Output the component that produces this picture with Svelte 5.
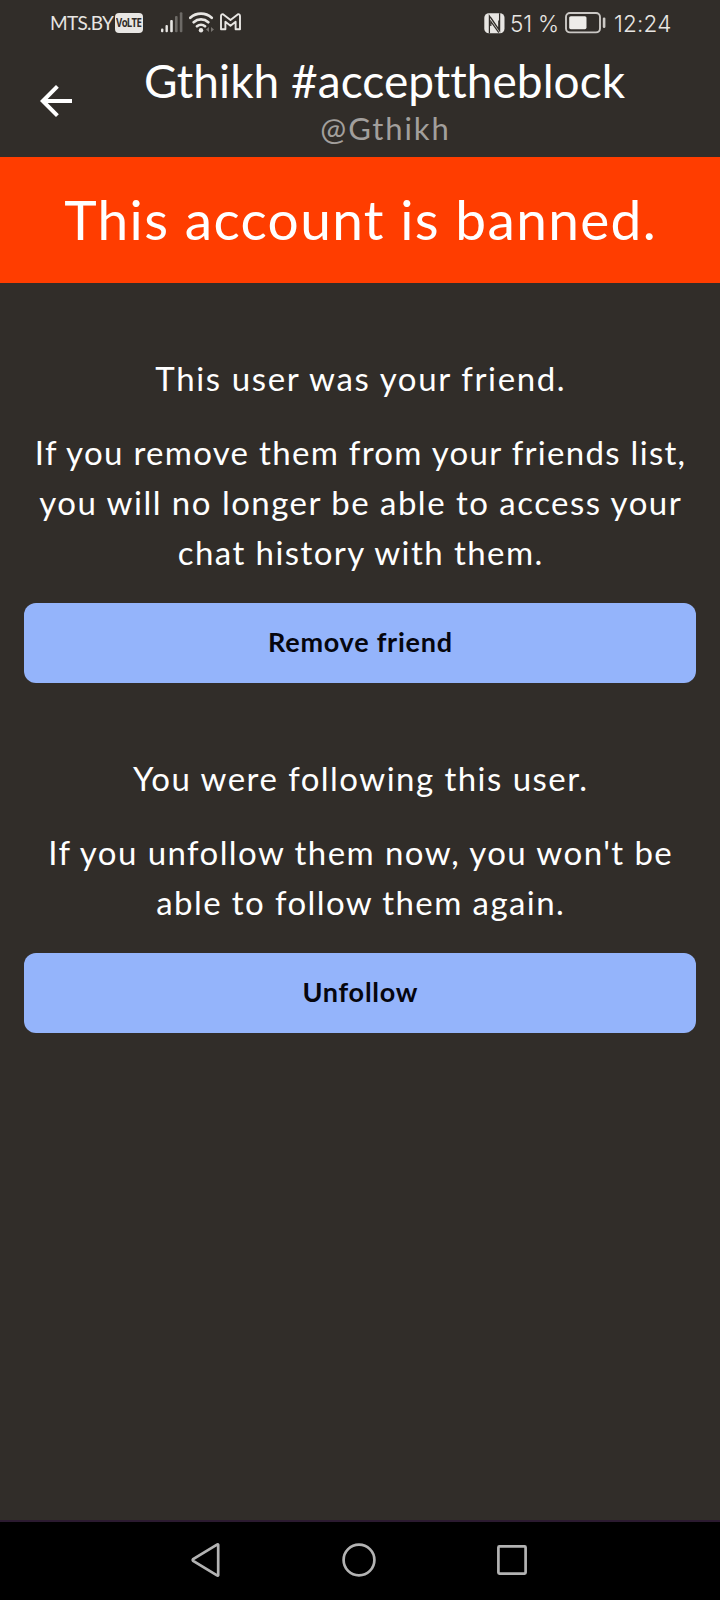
<script>
  const sections = [
    {
      heading: { text: 'This user was your friend.', tracking: 1.63 },
      lines: [
        { text: 'If you remove them from your friends list,', tracking: 1.3 },
        { text: 'you will no longer be able to access your', tracking: 1.48 },
        { text: 'chat history with them.', tracking: 1.44 }
      ],
      action: { text: 'Remove friend', tracking: 0.75 }
    },
    {
      heading: { text: 'You were following this user.', tracking: 1.46 },
      lines: [
        { text: "If you unfollow them now, you won't be", tracking: 1.43 },
        { text: 'able to follow them again.', tracking: 1.41 }
      ],
      action: { text: 'Unfollow', tracking: 0.75 }
    }
  ];
</script>

<!-- The negative margin drops the space after the last letter, so centring stays exact. -->
{#snippet tracked(t)}
  <span style="letter-spacing: {t.tracking}px; margin-right: {-t.tracking}px">{t.text}</span>
{/snippet}

<div class="screen">
  <div class="status">
    <div class="group">
      <span class="carrier">MTS.BY</span>
      <span class="volte"><b>VoLTE</b></span>
      <svg class="signal" width="22" height="21" viewBox="0 0 22 21" fill="#e8e6e3">
        <rect x="0" y="16.5" width="2.4" height="3.8" rx="1" />
        <rect x="4.5" y="13" width="2.4" height="7.3" rx="1" />
        <rect x="9.2" y="8" width="2.6" height="12.3" rx="1" />
        <g fill="#6d6a66">
          <rect x="14" y="4" width="2.6" height="16.3" rx="1" />
          <rect x="18.8" y="0.3" width="2.6" height="20" rx="1" />
        </g>
      </svg>
      <svg class="wifi" width="26" height="21" viewBox="0 0 26 21" fill="none" stroke="#e8e6e3" stroke-width="2.7" stroke-linecap="round">
        <path d="M1.3 5.8a16 16 0 0 1 21.4 0M4.7 10.2a11 11 0 0 1 14.6 0M8 14.2a6.2 6.2 0 0 1 8 0" />
        <circle cx="12" cy="18.2" r="2.2" fill="#e8e6e3" stroke="none" />
        <path d="M20 15v5l-3-2.5zM22 15v5l3-2.5z" fill="#77736f" stroke="none" />
      </svg>
      <svg class="mail" width="21" height="18" viewBox="0 0 21 18" fill="none" stroke="#e8e6e3" stroke-width="1.9" stroke-linejoin="round">
        <path d="M1 3.2Q1 1 3 1.2L10.5 7 18 1.2Q20 1 20 3.2V16.2H15.6V8.8L10.5 12.7 5.4 8.8V16.2H1Z" />
      </svg>
    </div>
    <div class="group">
      <svg class="nfc" width="21" height="21" viewBox="0 0 21 21">
        <rect x="0.3" y="0.3" width="20.2" height="20" rx="4.5" fill="#e8e6e3" />
        <path d="M5.4 20.3V3L14.8 16.6V7.5M15.6 0.3V17.6L6.8 4.6M6.8 13V8.4L14.8 19.6" fill="none" stroke="#312d29" stroke-width="1.25" />
      </svg>
      <span class="percent">51 %</span>
      <svg class="battery" width="41" height="22" viewBox="0 0 41 22">
        <rect x="1" y="1" width="34" height="19.4" rx="4" fill="none" stroke="#cbc8c5" stroke-width="1.9" />
        <rect x="4.2" y="4.2" width="17.3" height="13" rx="1.6" fill="#eeece9" />
        <rect x="37.8" y="5.6" width="2.6" height="10.4" rx="1.2" fill="#cbc8c5" />
      </svg>
      <span class="clock">12:24</span>
    </div>
  </div>

  <header>
    <svg class="back" width="32" height="32" viewBox="0 0 32 32" fill="none" stroke="#fff" stroke-width="4">
      <path d="M32 16H3M17.4 1.4L2.8 16l14.6 14.6" />
    </svg>
    <div class="names">
      <h1>Gthikh #accepttheblock</h1>
      <div class="handle">{@render tracked({ text: '@Gthikh', tracking: 1.9 })}</div>
    </div>
  </header>

  <div class="banner">{@render tracked({ text: 'This account is banned.', tracking: 1.34 })}</div>

  <main>
    {#each sections as s}
      <section>
        <p>{@render tracked(s.heading)}</p>
        <p>
          {#each s.lines as l}
            <span class="line">{@render tracked(l)}</span>
          {/each}
        </p>
        <button>{@render tracked(s.action)}</button>
      </section>
    {/each}
  </main>

  <nav>
    <svg width="30" height="34" viewBox="0 0 30 34"><path d="M27.2 1.8V32.2Q27 33 26 32.4L2.2 18Q1.2 17 2.2 16L26 1.6Q27 1 27.2 1.8Z" /></svg>
    <svg width="34" height="34" viewBox="0 0 34 34"><circle cx="17" cy="17" r="15.4" /></svg>
    <svg width="30" height="30" viewBox="0 0 30 30"><rect x="1.4" y="1.4" width="27.2" height="27.2" rx="1" /></svg>
  </nav>
</div>

<style>
  :global(body) { margin: 0; background: #312d29; }
  .screen {
    display: flex;
    flex-direction: column;
    width: 720px;
    height: 1600px;
    overflow: hidden;
    background: #312d29;
    color: #fff;
    font-family: Lato, "Open Sans", sans-serif;
    font-variant-ligatures: none;
  }
  .status {
    display: flex;
    justify-content: space-between;
    box-sizing: border-box;
    height: 50px;
    padding: 12px 48px 0 50px;
    color: #e8e6e3;
    font-family: Inter, sans-serif;
  }
  .group { display: flex; align-items: flex-start; }
  .group svg { flex: none; }
  .carrier { width: 65px; font-family: Lato, sans-serif; font-size: 19px; line-height: 22px; letter-spacing: -0.7px; white-space: nowrap; }
  .volte {
    display: flex;
    align-items: center;
    justify-content: center;
    width: 28px;
    height: 20px;
    margin-top: 1px;
    border-radius: 4px;
    background: #e8e6e3;
    color: #312d29;
  }
  .volte b { font: 700 12px/20px "Open Sans", sans-serif; letter-spacing: -0.9px; transform: scaleX(0.8); }
  .signal { margin-left: 18px; }
  .wifi { margin-left: 6px; }
  .mail { margin: 1px 0 0 5px; }
  .nfc { margin-top: 1px; }
  .percent { width: 53px; margin-left: 5px; font-size: 22.5px; line-height: 23px; font-weight: 300; letter-spacing: -0.2px; white-space: nowrap; }
  .battery { margin-left: 2px; }
  .clock { width: 58px; margin-left: 8px; font-size: 22.5px; line-height: 23px; font-weight: 300; letter-spacing: 0.2px; white-space: nowrap; }
  header { display: flex; height: 107px; }
  .back { flex: none; margin: 35px 0 0 40px; }
  .names { flex: 1; margin-right: 23px; text-align: center; }
  h1 { margin: 3px 0 0; font-weight: 400; font-size: 46px; line-height: 56px; letter-spacing: 0.04px; }
  .handle { margin-top: 1px; color: #a29f9c; font-size: 31px; line-height: 36px; }
  .banner { flex: none; height: 126px; background: #ff3d00; text-align: center; font-size: 55px; line-height: 124px; }
  main { flex: 1; }
  section { padding: 70px 24px 0; text-align: center; font-size: 33px; line-height: 50px; }
  p { margin: 0 0 24px; white-space: nowrap; }
  p + p { margin-bottom: 26px; }
  .line { display: block; }
  button {
    display: block;
    width: 100%;
    height: 80px;
    padding: 0 0 2px;
    border: 0;
    border-radius: 12px;
    background: #94b4fb;
    color: #06060e;
    font: 700 27px/78px Lato, sans-serif;
    font-variant-ligatures: none;
  }
  nav {
    display: flex;
    align-items: center;
    justify-content: space-between;
    box-sizing: border-box;
    height: 80px;
    padding: 0 193px 2px 191px;
    border-top: 2px solid #2b1a30;
    background: #000;
  }
  nav svg { fill: none; stroke: #b3b3b3; stroke-width: 2.7; }
</style>
